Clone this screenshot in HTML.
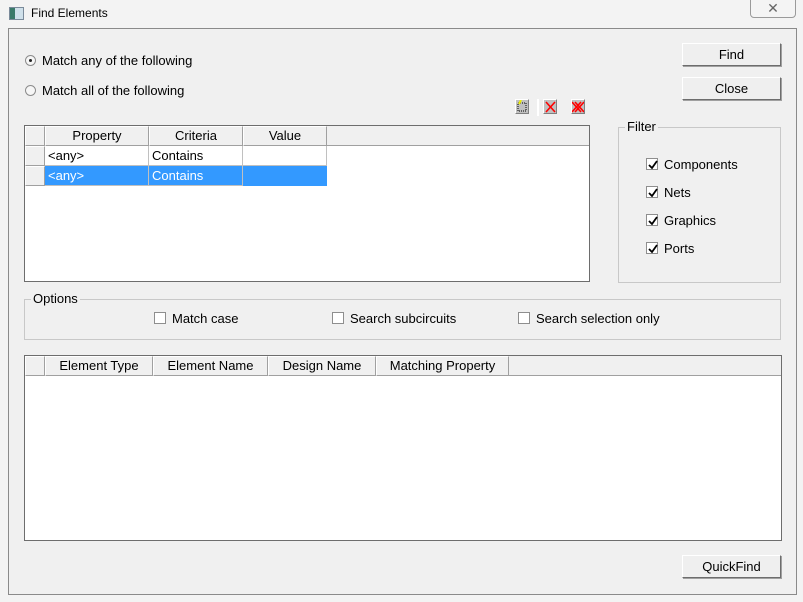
<!DOCTYPE html>
<html><head><style>
*{margin:0;padding:0;box-sizing:border-box}
body{width:803px;height:602px;background:#f3f3f3;font-family:"Liberation Sans",sans-serif;font-size:13px;color:#000;position:relative;overflow:hidden}
.a{position:absolute}
.client{left:8px;top:28px;width:789px;height:567px;background:#f0f0f0;border:1px solid #8a8a8a}
.btn{background:#efefef;border:1px solid #fff;border-right-color:#6d6d6d;border-bottom-color:#6d6d6d;box-shadow:1px 1px 0 #a0a0a0;text-align:center;line-height:21px;width:99px;height:23px;left:682px}
.rad{width:11px;height:11px;border-radius:50%;border:1px solid #8c8c8c;background:#f6f6f6}
.cb{width:12px;height:12px;border:1px solid #8e8e8e;background:#fff}
.cb svg{position:absolute;left:1px;top:1px}
.grp{border:1px solid #c8c8c8;}
.lbl{background:#f0f0f0;padding:0 2px}
.hdr{background:#f0f0f0;border-right:1px solid #a0a0a0;border-bottom:1px solid #a0a0a0;border-left:1px solid #fff;border-top:1px solid #fff;text-align:center;line-height:17px;height:20px}
.cell{height:20px;line-height:19px;padding-left:3px;border-right:1px solid #c0c0c0;border-bottom:1px solid #c0c0c0}
.icon{width:14px;height:15px;background:#c0c0c0;border:1px solid #fff;border-right-color:#808080;border-bottom-color:#808080}
</style></head><body>
<div class="a" style="left:9px;top:7px;width:15px;height:13px;border:1px solid #7a8a9a;background:linear-gradient(90deg,#3a7a6a 40%,#cfe0ea 40%)"></div>
<div class="a" style="left:31px;top:6px;font-size:12px">Find Elements</div>
<div class="a" style="left:750px;top:-2px;width:46px;height:20px;border:1px solid #9a9a9a;border-radius:0 0 4px 4px;background:#f4f4f4;text-align:center;color:#666;font-size:14px;line-height:18px">✕</div>
<div class="a client"></div>

<div class="a rad" style="left:25px;top:55px"><div class="a" style="left:3px;top:3px;width:3px;height:3px;background:#222;border-radius:50%"></div></div>
<div class="a" style="left:42px;top:53px">Match any of the following</div>
<div class="a rad" style="left:25px;top:85px"></div>
<div class="a" style="left:42px;top:83px">Match all of the following</div>

<div class="a btn" style="top:43px">Find</div>
<div class="a btn" style="top:77px">Close</div>

<div class="a icon" style="left:515px;top:99px"><svg width="12" height="13"><path d="M2 3h8v8H2z" fill="none" stroke="#000" stroke-dasharray="1 1"/><path d="M3 4l2-4" stroke="#ee0" stroke-width="2"/></svg></div>
<div class="a" style="left:537px;top:99px;width:2px;height:17px;background:#fff"></div>
<div class="a icon" style="left:543px;top:99px"><svg width="12" height="13"><path d="M2 2l9 10M11 2L2 12" stroke="#f00" stroke-width="1.6"/></svg></div>
<div class="a icon" style="left:571px;top:99px"><svg width="12" height="13"><path d="M0 2l9 10M9 2L0 12M3 2l9 10M12 2L3 12" stroke="#f00" stroke-width="1.6"/></svg></div>

<div class="a" style="left:24px;top:125px;width:566px;height:157px;background:#fff;border:1px solid #6d6d6d"></div>
<div class="a" style="left:25px;top:126px;width:564px;height:20px;background:#f0f0f0;border-bottom:1px solid #a0a0a0"></div>
<div class="a hdr" style="left:25px;top:126px;width:20px"></div>
<div class="a hdr" style="left:45px;top:126px;width:104px">Property</div>
<div class="a hdr" style="left:149px;top:126px;width:94px">Criteria</div>
<div class="a hdr" style="left:243px;top:126px;width:84px">Value</div>
<div class="a hdr" style="left:25px;top:146px;width:20px"></div>
<div class="a hdr" style="left:25px;top:166px;width:20px"></div>
<div class="a cell" style="left:45px;top:146px;width:104px">&lt;any&gt;</div>
<div class="a cell" style="left:149px;top:146px;width:94px">Contains</div>
<div class="a cell" style="left:243px;top:146px;width:84px"></div>
<div class="a" style="left:45px;top:166px;width:282px;height:20px;background:#3399ff"></div>
<div class="a cell" style="left:45px;top:166px;width:104px;color:#fff">&lt;any&gt;</div>
<div class="a cell" style="left:149px;top:166px;width:94px;color:#fff">Contains</div>

<div class="a grp" style="left:618px;top:127px;width:163px;height:156px"></div>
<div class="a lbl" style="left:625px;top:119px">Filter</div>
<div class="a cb" style="left:646px;top:158px"><svg width="10" height="10"><path d="M1 5l3 3 5-7" stroke="#000" stroke-width="1.8" fill="none"/></svg></div>
<div class="a" style="left:664px;top:157px">Components</div>
<div class="a cb" style="left:646px;top:186px"><svg width="10" height="10"><path d="M1 5l3 3 5-7" stroke="#000" stroke-width="1.8" fill="none"/></svg></div>
<div class="a" style="left:664px;top:185px">Nets</div>
<div class="a cb" style="left:646px;top:214px"><svg width="10" height="10"><path d="M1 5l3 3 5-7" stroke="#000" stroke-width="1.8" fill="none"/></svg></div>
<div class="a" style="left:664px;top:213px">Graphics</div>
<div class="a cb" style="left:646px;top:242px"><svg width="10" height="10"><path d="M1 5l3 3 5-7" stroke="#000" stroke-width="1.8" fill="none"/></svg></div>
<div class="a" style="left:664px;top:241px">Ports</div>

<div class="a grp" style="left:24px;top:299px;width:757px;height:41px"></div>
<div class="a lbl" style="left:31px;top:291px">Options</div>
<div class="a cb" style="left:154px;top:312px"></div>
<div class="a" style="left:172px;top:311px">Match case</div>
<div class="a cb" style="left:332px;top:312px"></div>
<div class="a" style="left:350px;top:311px">Search subcircuits</div>
<div class="a cb" style="left:518px;top:312px"></div>
<div class="a" style="left:536px;top:311px">Search selection only</div>

<div class="a" style="left:24px;top:355px;width:758px;height:186px;background:#fff;border:1px solid #6d6d6d"></div>
<div class="a" style="left:25px;top:356px;width:756px;height:20px;background:#f0f0f0;border-bottom:1px solid #a0a0a0"></div>
<div class="a hdr" style="left:25px;top:356px;width:20px"></div>
<div class="a hdr" style="left:45px;top:356px;width:108px">Element Type</div>
<div class="a hdr" style="left:153px;top:356px;width:115px">Element Name</div>
<div class="a hdr" style="left:268px;top:356px;width:108px">Design Name</div>
<div class="a hdr" style="left:376px;top:356px;width:133px">Matching Property</div>

<div class="a btn" style="top:555px">QuickFind</div>
</body></html>
